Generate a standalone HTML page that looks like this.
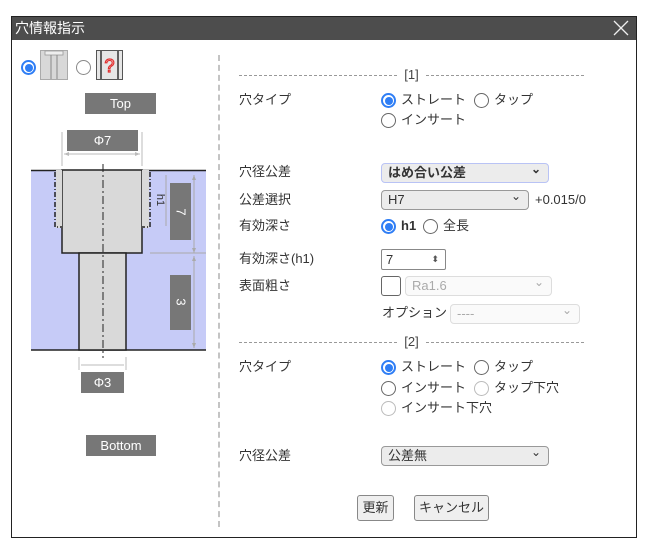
<!DOCTYPE html>
<html><head><meta charset="utf-8"><style>
*{box-sizing:border-box}
body{margin:0;width:648px;height:550px;background:#fff;font-family:"Liberation Sans","Noto Sans CJK JP",sans-serif;font-size:13px;color:#333;position:relative;overflow:hidden}
.a{position:absolute}
.dlg{left:11px;top:16px;width:626px;height:522px;border:1px solid #222;}
.title{left:12px;top:17px;width:624px;height:23px;background:#4d4d4d;color:#fff;font-size:14px;line-height:23px;padding-left:3px}
.lbl{left:239px;line-height:16px}
.rad{width:15px;height:15px;border:1.5px solid #666;border-radius:50%;background:#fff}
.rad.on{border:2px solid #2f7ef5}
.rad.on::after{content:"";position:absolute;left:1.5px;top:1.5px;width:8px;height:8px;border-radius:50%;background:#2f7ef5}
.rad.dis{border-color:#bbb}
.t{line-height:16px;color:#333}
.sel{border:1px solid #999;border-radius:4px;background:#ececec;padding-left:6px;line-height:17px;font-size:13px}
.sel::after{content:"⌄";position:absolute;right:7px;top:-3px;font-size:12px}
.gbox{background:#777;color:#fff;text-align:center;font-size:13px}
.btn{border:1px solid #888;border-radius:3px;background:#efefef;text-align:center;line-height:24px;font-size:13px}
.sep{left:239px;width:345px;height:14px;font-size:13px;color:#444;text-align:center;line-height:14px}
.sep::before,.sep::after{content:"";position:absolute;top:7px;width:158px;border-top:1px dashed #999}
.sep::before{left:0}.sep::after{right:0}
</style></head><body>
<div class="a dlg"></div>
<div class="a title">穴情報指示</div>
<svg class="a" style="left:612px;top:19px" width="18" height="18"><path d="M2 2L16 16M16 2L2 16" stroke="#eee" stroke-width="1.3"/></svg>

<div class="a rad on" style="left:21px;top:60px"></div>
<svg class="a" style="left:40px;top:50px" width="28" height="30"><rect x="0.5" y="0.5" width="27" height="29" fill="#d8d8d8" stroke="#aaa"/><rect x="5" y="1" width="18" height="4" fill="#eee" stroke="#999" stroke-width=".8"/><path d="M11 5V29M17 5V29" stroke="#888"/></svg>
<div class="a rad" style="left:76px;top:60px;border-color:#888"></div>
<svg class="a" style="left:96px;top:50px" width="27" height="30"><rect x="0.5" y="0.5" width="26" height="29" fill="#e6e6e6" stroke="#555"/><path d="M5 1V29M22 1V29" stroke="#333" stroke-width="1.5"/><text x="13.5" y="22" font-size="18" text-anchor="middle" fill="#fff" stroke="#e03030" stroke-width="1.2" font-family="Liberation Sans">?</text></svg>
<div class="a gbox" style="left:85px;top:93px;width:71px;height:21px;line-height:21px">Top</div>
<div class="a gbox" style="left:67px;top:130px;width:71px;height:21px;line-height:21px">Φ7</div>
<svg class="a" style="left:0;top:120px" width="218" height="250">
<path d="M62 12V46M142 12V46" stroke="#bbb"/><path d="M64 34H140" stroke="#bbb"/><path d="M64 34l5-2v4zM140 34l-5-2v4z" fill="#bbb"/>
<rect x="31" y="50" width="175" height="180" fill="#c6cbf7"/>
<path d="M31 50.5H206M31 230H206" stroke="#222" stroke-width="1.5"/>
<rect x="62" y="50" width="80" height="83" fill="#d9d9d9" stroke="#222" stroke-width="1.5"/>
<rect x="56" y="50" width="6" height="58" fill="#d9d9d9"/><rect x="142" y="50" width="7" height="58" fill="#d9d9d9"/>
<path d="M55 52V107H62M150 52V107H142" stroke="#222" stroke-width="1.5" stroke-dasharray="5 2 1 2" fill="none"/>
<rect x="79" y="133" width="47" height="97" fill="#d9d9d9" stroke="#222" stroke-width="1.5"/>
<path d="M103 44V238" stroke="#222" stroke-dasharray="8 3 2 3"/>
<path d="M194 55V133M166 55V106M150 133H206M194 136V228" stroke="#aaa"/>
<path d="M194 55l-2 5h4zM194 133l-2-5h4zM194 136l-2 5h4zM194 228l-2-5h4z" fill="#aaa"/>
<rect x="170" y="63" width="21" height="57" fill="#777"/><text x="180.5" y="92" font-size="13" fill="#fff" text-anchor="middle" transform="rotate(90 180.5 92)" dy="4">7</text>
<rect x="170" y="155" width="21" height="55" fill="#777"/><text x="180.5" y="182" font-size="13" fill="#fff" text-anchor="middle" transform="rotate(90 180.5 182)" dy="4">3</text>
<text x="160" y="80" font-size="11" fill="#333" transform="rotate(90 160 80)" text-anchor="middle" dy="3">h1</text>
<path d="M79 237V252M126 237V252M81 245H124" stroke="#bbb"/>
</svg>
<div class="a gbox" style="left:81px;top:372px;width:43px;height:21px;line-height:21px">Φ3</div>
<div class="a gbox" style="left:86px;top:435px;width:70px;height:21px;line-height:21px">Bottom</div>
<div class="a" style="left:218px;top:55px;height:472px;border-left:2px dashed #c4c4c4"></div>

<div class="a sep" style="top:68px">[1]</div>
<div class="a lbl" style="top:92px">穴タイプ</div>
<div class="a rad on" style="left:381px;top:93px"></div><div class="a t" style="left:401px;top:92px">ストレート</div>
<div class="a rad" style="left:474px;top:93px"></div><div class="a t" style="left:494px;top:92px">タップ</div>
<div class="a rad" style="left:381px;top:113px"></div><div class="a t" style="left:401px;top:112px">インサート</div>

<div class="a lbl" style="top:164px">穴径公差</div>
<div class="a sel" style="left:381px;top:163px;width:168px;height:20px;border-color:#b9c3f5;font-weight:bold">はめ合い公差</div>
<div class="a lbl" style="top:192px">公差選択</div>
<div class="a sel" style="left:381px;top:190px;width:148px;height:20px">H7</div>
<div class="a t" style="left:535px;top:192px">+0.015/0</div>
<div class="a lbl" style="top:218px">有効深さ</div>
<div class="a rad on" style="left:381px;top:219px"></div><div class="a t" style="left:401px;top:218px;font-weight:bold">h1</div>
<div class="a rad" style="left:423px;top:219px"></div><div class="a t" style="left:443px;top:218px">全長</div>
<div class="a lbl" style="top:251px">有効深さ(h1)</div>
<div class="a" style="left:381px;top:249px;width:65px;height:21px;border:1px solid #888;border-radius:2px;background:#fff;padding-left:4px;line-height:19px">7<span class="a" style="right:6px;top:0;font-size:9px;color:#555">⬍</span></div>
<div class="a lbl" style="top:278px">表面粗さ</div>
<div class="a" style="left:381px;top:276px;width:20px;height:20px;border:1.5px solid #666;border-radius:3px"></div>
<div class="a sel" style="left:405px;top:276px;width:147px;height:20px;background:#fafafa;border-color:#ddd;color:#aaa">Ra1.6</div>
<div class="a t" style="left:382px;top:305px">オプション</div>
<div class="a sel" style="left:450px;top:304px;width:130px;height:20px;background:#fafafa;border-color:#ddd;color:#aaa">----</div>

<div class="a sep" style="top:335px">[2]</div>
<div class="a lbl" style="top:359px">穴タイプ</div>
<div class="a rad on" style="left:381px;top:360px"></div><div class="a t" style="left:401px;top:359px">ストレート</div>
<div class="a rad" style="left:474px;top:360px"></div><div class="a t" style="left:494px;top:359px">タップ</div>
<div class="a rad" style="left:381px;top:381px"></div><div class="a t" style="left:401px;top:380px">インサート</div>
<div class="a rad dis" style="left:474px;top:381px"></div><div class="a t" style="left:494px;top:380px">タップ下穴</div>
<div class="a rad dis" style="left:381px;top:401px"></div><div class="a t" style="left:401px;top:400px">インサート下穴</div>
<div class="a lbl" style="top:448px">穴径公差</div>
<div class="a sel" style="left:381px;top:446px;width:168px;height:20px">公差無</div>
<div class="a btn" style="left:357px;top:495px;width:37px;height:26px">更新</div>
<div class="a btn" style="left:414px;top:495px;width:75px;height:26px">キャンセル</div>
</body></html>
